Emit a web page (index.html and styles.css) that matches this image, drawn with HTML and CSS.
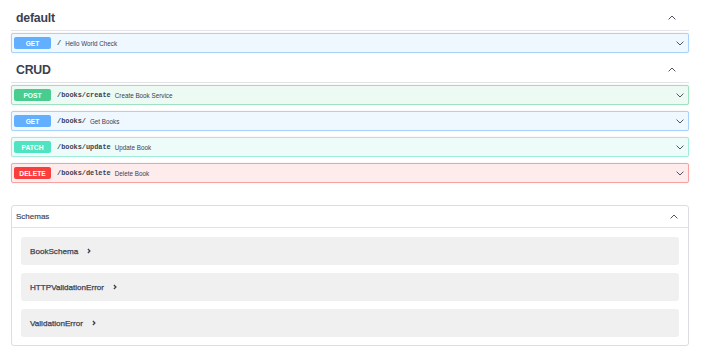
FILE: index.html
```html
<!DOCTYPE html>
<html lang="en">
<head>
<meta charset="utf-8">
<title>API docs</title>
<link rel="stylesheet" href="styles.css">
</head>
<body>
<main class="page">
  <section class="tag">
    <div class="tag-head">
      <h3 class="tag-title">default</h3>
      <svg class="chev-up" width="8" height="5" viewBox="0 0 8 5"><path d="M0.6 4.4 L4 1 L7.4 4.4" fill="none" stroke="#3b4151" stroke-width="0.9"/></svg>
    </div>
    <div class="ops">
      <div class="op op-get">
        <span class="method">GET</span>
        <span class="path">/</span>
        <span class="desc">Hello World Check</span>
        <svg class="chev-down" width="8" height="5" viewBox="0 0 8 5"><path d="M0.6 0.6 L4 4 L7.4 0.6" fill="none" stroke="#3b4151" stroke-width="0.9"/></svg>
      </div>
    </div>
  </section>

  <section class="tag tag-next">
    <div class="tag-head">
      <h3 class="tag-title">CRUD</h3>
      <svg class="chev-up" width="8" height="5" viewBox="0 0 8 5"><path d="M0.6 4.4 L4 1 L7.4 4.4" fill="none" stroke="#3b4151" stroke-width="0.9"/></svg>
    </div>
    <div class="ops">
      <div class="op op-post">
        <span class="method">POST</span>
        <span class="path">/books/create</span>
        <span class="desc">Create Book Service</span>
        <svg class="chev-down" width="8" height="5" viewBox="0 0 8 5"><path d="M0.6 0.6 L4 4 L7.4 0.6" fill="none" stroke="#3b4151" stroke-width="0.9"/></svg>
      </div>
      <div class="op op-get">
        <span class="method">GET</span>
        <span class="path">/books/</span>
        <span class="desc">Get Books</span>
        <svg class="chev-down" width="8" height="5" viewBox="0 0 8 5"><path d="M0.6 0.6 L4 4 L7.4 0.6" fill="none" stroke="#3b4151" stroke-width="0.9"/></svg>
      </div>
      <div class="op op-patch">
        <span class="method">PATCH</span>
        <span class="path">/books/update</span>
        <span class="desc">Update Book</span>
        <svg class="chev-down" width="8" height="5" viewBox="0 0 8 5"><path d="M0.6 0.6 L4 4 L7.4 0.6" fill="none" stroke="#3b4151" stroke-width="0.9"/></svg>
      </div>
      <div class="op op-delete">
        <span class="method">DELETE</span>
        <span class="path">/books/delete</span>
        <span class="desc">Delete Book</span>
        <svg class="chev-down" width="8" height="5" viewBox="0 0 8 5"><path d="M0.6 0.6 L4 4 L7.4 0.6" fill="none" stroke="#3b4151" stroke-width="0.9"/></svg>
      </div>
    </div>
  </section>

  <section class="models">
    <div class="models-head">
      <h4 class="models-title">Schemas</h4>
      <svg class="chev-up" width="8" height="5" viewBox="0 0 8 5"><path d="M0.6 4.4 L4 1 L7.4 4.4" fill="none" stroke="#3b4151" stroke-width="0.9"/></svg>
    </div>
    <div class="models-body">
      <div class="model">
        <span class="model-title">BookSchema</span>
        <svg class="chev-right" width="4" height="6" viewBox="0 0 4 6"><path d="M0.9 1 L2.9 3 L0.9 5" fill="none" stroke="#3b4151" stroke-width="1.3"/></svg>
      </div>
      <div class="model">
        <span class="model-title">HTTPValidationError</span>
        <svg class="chev-right" width="4" height="6" viewBox="0 0 4 6"><path d="M0.9 1 L2.9 3 L0.9 5" fill="none" stroke="#3b4151" stroke-width="1.3"/></svg>
      </div>
      <div class="model">
        <span class="model-title">ValidationError</span>
        <svg class="chev-right" width="4" height="6" viewBox="0 0 4 6"><path d="M0.9 1 L2.9 3 L0.9 5" fill="none" stroke="#3b4151" stroke-width="1.3"/></svg>
      </div>
    </div>
  </section>
</main>
</body>
</html>
```

FILE: styles.css
```css
html, body {
  margin: 0;
  padding: 0;
  background: #ffffff;
}

body {
  font-family: "Liberation Sans", Arial, sans-serif;
  color: #3b4151;
}

.page {
  padding: 5px 31px 0 11px;
}

.tag-next {
  margin-top: 4px;
}

.tag-head {
  display: flex;
  align-items: center;
  justify-content: space-between;
  height: 25px;
  padding: 0 13px 0 5px;
  border-bottom: 1px solid #e3e4e7;
}

.tag-title {
  margin: 0;
  font-size: 12.3px;
  font-weight: 700;
  letter-spacing: -0.2px;
  color: #3b4151;
}

.chev-up,
.chev-down,
.chev-right {
  display: block;
  flex: none;
}

.ops {
  display: flex;
  flex-direction: column;
  gap: 6px;
  margin-top: 2px;
}

.op {
  display: flex;
  align-items: center;
  height: 20px;
  box-sizing: border-box;
  padding: 0 2px;
  border: 1px solid;
  border-radius: 2px;
  box-shadow: 0 0 2px rgba(0, 0, 0, 0.1);
}

.op-get {
  background: #eff7ff;
  border-color: #a8d2fc;
}
.op-get .method { background: #61affe; }

.op-post {
  background: #edfaf4;
  border-color: #9ee0c1;
}
.op-post .method { background: #49cc90; }

.op-patch {
  background: #eefcf9;
  border-color: #a3ecdc;
}
.op-patch .method { background: #50e3c2; }

.op-delete {
  background: #feecec;
  border-color: #f7a2a2;
}
.op-delete .method { background: #f93e3e; }

.method {
  flex: none;
  width: 37px;
  height: 12px;
  border-radius: 2px;
  display: flex;
  align-items: center;
  justify-content: center;
  font-size: 6.7px;
  font-weight: 700;
  color: #ffffff;
}

.path {
  margin-left: 6px;
  font-family: "Liberation Mono", "DejaVu Sans Mono", monospace;
  font-size: 6.9px;
  font-weight: 700;
  color: #3b4151;
}

.desc {
  margin-left: 4px;
  font-size: 6.3px;
  color: #3b4151;
}

.chev-down {
  margin-left: auto;
  margin-right: 2px;
}

.models {
  margin-top: 22px;
  border: 1px solid #dcdde0;
  border-radius: 3px;
}

.models-head {
  display: flex;
  align-items: center;
  justify-content: space-between;
  height: 21px;
  padding: 0 10px 0 4px;
  border-bottom: 1px solid #e1e2e5;
}

.models-title {
  margin: 0;
  font-size: 8px;
  font-weight: 400;
  color: #3b4151;
  -webkit-text-stroke: 0.15px #3b4151;
}

.models-body {
  display: flex;
  flex-direction: column;
  gap: 8px;
  padding: 9px 9px 8px;
}

.model {
  display: flex;
  align-items: center;
  height: 28px;
  padding-left: 9px;
  background: #f0f0f0;
  border-radius: 3px;
}

.model-title {
  font-size: 8.1px;
  color: #3b4151;
  -webkit-text-stroke: 0.25px #3b4151;
}

.chev-right {
  margin-left: 9px;
}
```
